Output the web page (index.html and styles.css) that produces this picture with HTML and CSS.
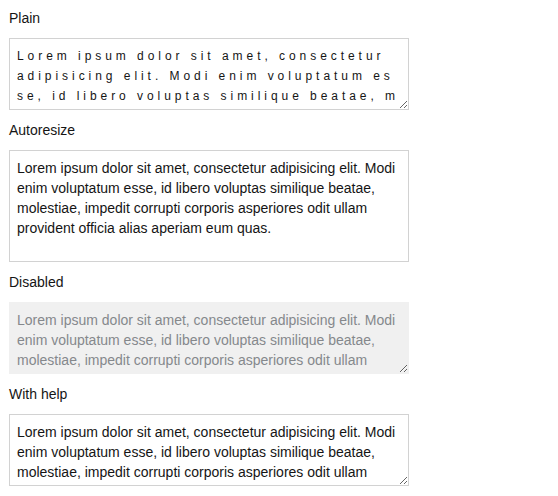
FILE: index.html
```html
<!DOCTYPE html>
<html>
<head>
<meta charset="utf-8">
<link rel="stylesheet" href="styles.css">
</head>
<body>
<form class="form">
  <div class="group">
    <label class="label" for="plain">Plain</label>
    <textarea id="plain" class="control rows-3 spaced">Lorem ipsum dolor sit amet, consectetur adipisicing elit. Modi enim voluptatum esse, id libero voluptas similique beatae, molestiae, impedit corrupti corporis asperiores odit ullam provident officia alias aperiam eum quas.</textarea>
  </div>
  <div class="group">
    <label class="label" for="auto">Autoresize</label>
    <textarea id="auto" class="control rows-5 noresize">Lorem ipsum dolor sit amet, consectetur adipisicing elit. Modi enim voluptatum esse, id libero voluptas similique beatae, molestiae, impedit corrupti corporis asperiores odit ullam provident officia alias aperiam eum quas.</textarea>
  </div>
  <div class="group">
    <label class="label" for="dis">Disabled</label>
    <textarea id="dis" class="control rows-3" disabled>Lorem ipsum dolor sit amet, consectetur adipisicing elit. Modi enim voluptatum esse, id libero voluptas similique beatae, molestiae, impedit corrupti corporis asperiores odit ullam provident officia alias aperiam eum quas.</textarea>
  </div>
  <div class="group">
    <label class="label" for="help">With help</label>
    <textarea id="help" class="control rows-3">Lorem ipsum dolor sit amet, consectetur adipisicing elit. Modi enim voluptatum esse, id libero voluptas similique beatae, molestiae, impedit corrupti corporis asperiores odit ullam provident officia alias aperiam eum quas.</textarea>
  </div>
</form>
</body>
</html>
```

FILE: styles.css
```css
html, body {
  margin: 0;
  padding: 0;
  background: #ffffff;
}
body {
  font-family: "Liberation Sans", Arial, sans-serif;
  font-size: 14px;
  color: #151515;
  overflow: hidden;
}
.form {
  display: flex;
  flex-direction: column;
  gap: 10px;
  padding: 8px 0 0 9px;
  margin: 0;
}
.group {
  display: flex;
  flex-direction: column;
  gap: 9px;
}
.label {
  display: block;
  line-height: 21px;
  font-size: 14px;
  color: #151515;
}
.control {
  display: block;
  box-sizing: border-box;
  width: 400px;
  margin: 0;
  padding: 7px 8px 3px 7px;
  border: 1px solid #d2d2d2;
  border-radius: 0;
  font-family: "Liberation Sans", Arial, sans-serif;
  font-size: 14px;
  line-height: 20px;
  color: #151515;
  background: #ffffff;
  overflow: hidden;
  outline: none;
}
.rows-3 { height: 72px; }
.rows-5 { height: 112px; }
.spaced {
  font-size: 12px;
  letter-spacing: 3.95px;
  word-break: break-all;
  padding-right: 7px;
}
.noresize {
  resize: none;
}
.control:disabled {
  background: #f0f0f0;
  color: #85888c;
  border-color: #f0f0f0;
}
```
